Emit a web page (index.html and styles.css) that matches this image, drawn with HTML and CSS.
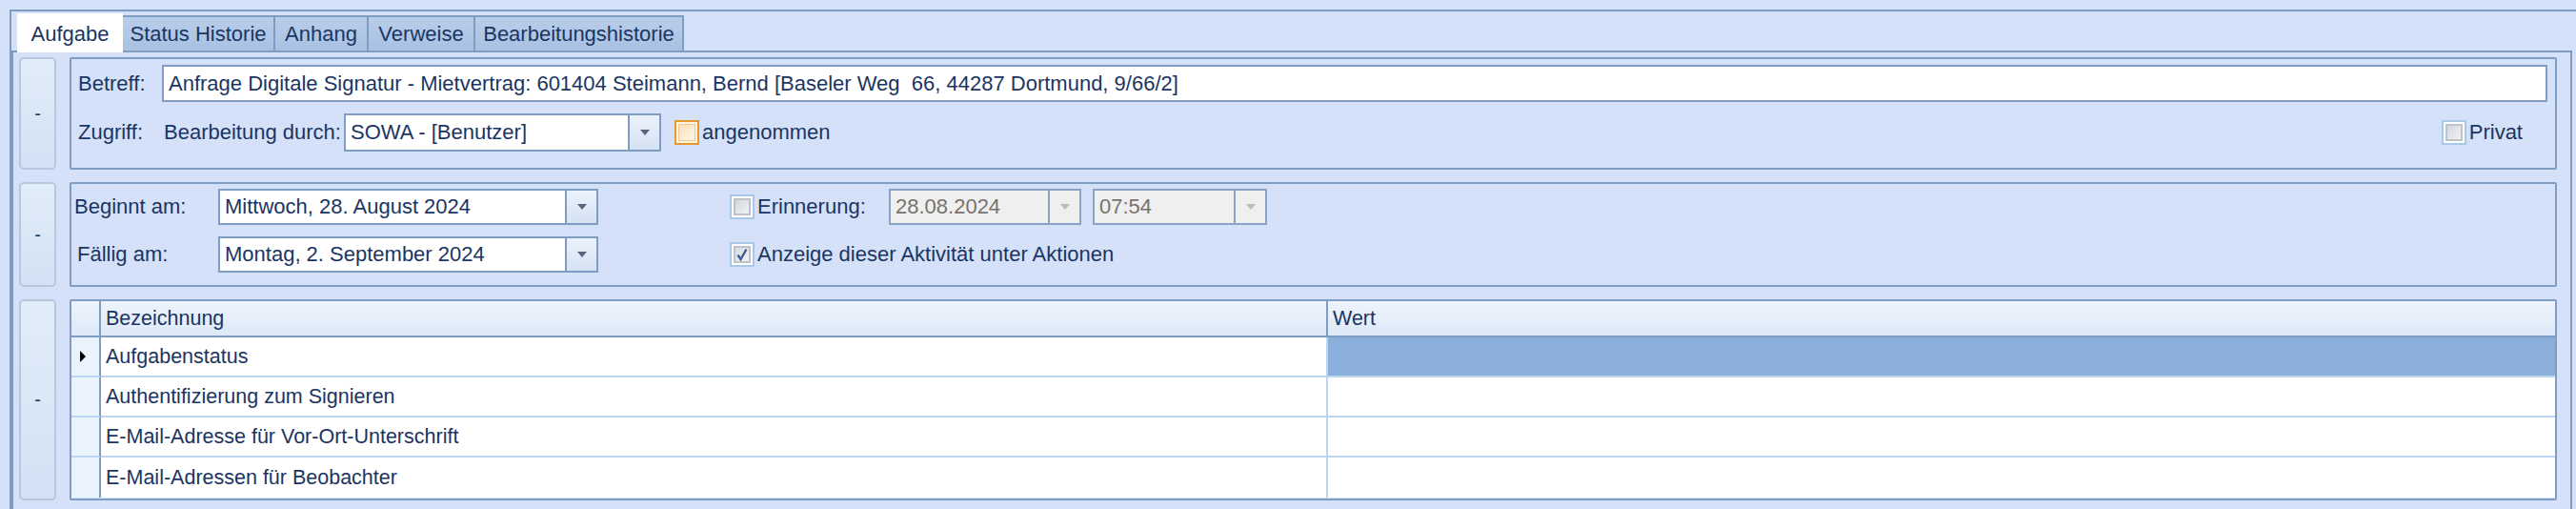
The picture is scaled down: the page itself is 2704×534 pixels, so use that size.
FILE: index.html
```html
<!DOCTYPE html>
<html lang="de">
<head>
<meta charset="utf-8">
<title>Aufgabe</title>
<link rel="stylesheet" href="styles.css">
</head>
<body>
<div class="frame">
  <div class="tabs">
    <div class="tab active t-aufgabe">Aufgabe</div>
    <div class="tab t-status">Status Historie</div>
    <div class="tab t-anhang">Anhang</div>
    <div class="tab t-verweise">Verweise</div>
    <div class="tab t-bearb">Bearbeitungshistorie</div>
  </div>
  <div class="page">
    <section class="row">
      <div class="collapse">-</div>
      <div class="group g1">
        <div class="line">
          <span class="lbl lbl-betreff">Betreff:</span>
          <div class="input grow">Anfrage Digitale Signatur - Mietvertrag: 601404 Steimann, Bernd [Baseler Weg&nbsp; 66, 44287 Dortmund, 9/66/2]</div>
        </div>
        <div class="line line2">
          <span class="lbl lbl-zugriff">Zugriff:</span>
          <span class="lbl lbl-bd">Bearbeitung durch:</span>
          <div class="combo combo-user"><span class="ctext">SOWA - [Benutzer]</span><span class="drop"><i class="arrow"></i></span></div>
          <span class="chk chk-orange"><i></i></span>
          <span class="chk-text">angenommen</span>
          <span class="spacer"></span>
          <span class="chk chk-plain"><i></i></span>
          <span class="chk-text privat">Privat</span>
        </div>
      </div>
    </section>
    <section class="row">
      <div class="collapse">-</div>
      <div class="group g2">
        <div class="line">
          <span class="lbl lbl-date">Beginnt am:</span>
          <div class="combo combo-date"><span class="ctext">Mittwoch, 28. August 2024</span><span class="drop"><i class="arrow"></i></span></div>
          <span class="chk chk-plain chk-right"><i></i></span>
          <span class="chk-text lbl-erin">Erinnerung:</span>
          <div class="combo disabled combo-d"><span class="ctext">28.08.2024</span><span class="drop"><i class="arrow"></i></span></div>
          <div class="combo disabled combo-t"><span class="ctext">07:54</span><span class="drop"><i class="arrow"></i></span></div>
        </div>
        <div class="line line-b">
          <span class="lbl lbl-date lbl-faellig">Fällig am:</span>
          <div class="combo combo-date"><span class="ctext">Montag, 2. September 2024</span><span class="drop"><i class="arrow"></i></span></div>
          <span class="chk chk-plain chk-checked chk-right"><i><svg viewBox="0 0 12 14" width="12" height="14"><path d="M1.5 7.5 L4.5 12 L10.5 1.5" fill="none" stroke="#3d5f93" stroke-width="2.4"/></svg></i></span>
          <span class="chk-text">Anzeige dieser Aktivität unter Aktionen</span>
        </div>
      </div>
    </section>
    <section class="row">
      <div class="collapse collapse-tall">-</div>
      <div class="group g3">
        <div class="grid">
          <div class="ind head"></div>
          <div class="cell head c-name">Bezeichnung</div>
          <div class="cell head c-val">Wert</div>

          <div class="ind"><i class="pointer"></i></div>
          <div class="cell c-name">Aufgabenstatus</div>
          <div class="cell c-val selected"></div>

          <div class="ind"></div>
          <div class="cell c-name">Authentifizierung zum Signieren</div>
          <div class="cell c-val"></div>

          <div class="ind"></div>
          <div class="cell c-name">E-Mail-Adresse für Vor-Ort-Unterschrift</div>
          <div class="cell c-val"></div>

          <div class="ind last"></div>
          <div class="cell c-name last">E-Mail-Adressen für Beobachter</div>
          <div class="cell c-val last"></div>
        </div>
      </div>
    </section>
  </div>
</div>
</body>
</html>
```
FILE: styles.css
```css
* { box-sizing: border-box; }
html, body { margin: 0; padding: 0; }
body {
  width: 2704px;
  height: 534px;
  overflow: hidden;
  background: #d5e1f8;
  font-family: "Liberation Sans", Arial, sans-serif;
  font-size: 22px;
  color: #1b3563;
}
.frame {
  margin: 10px 0 0 10px;
  border-top: 2px solid #7f9cc2;
  border-left: 2px solid #7f9cc2;
  height: 524px;
}
.tabs {
  display: flex;
  align-items: flex-end;
  height: 41px;
  padding-left: 6px;
}
.tab {
  height: 37px;
  padding: 0;
  display: flex;
  align-items: center;
  justify-content: center;
  border: 2px solid #7f9cc2;
  border-bottom: none;
  background: linear-gradient(#b8cde9, #a9c1e2);
  margin-left: -2px;
  white-space: nowrap;
}
.tab.active {
  height: 41px;
  margin-bottom: -2px;
  margin-left: 0;
  background: #ffffff;
  border-color: #ffffff;
  position: relative;
  z-index: 1;
}
.t-aufgabe { width: 111px; }
.t-status { width: 162px; }
.t-anhang { width: 100px; }
.t-verweise { width: 114px; }
.t-bearb { width: 221px; }
.page {
  border: 2px solid #7f9cc2;
  margin-right: 4px;
  height: 485px;
  padding: 5px 14px 0 6px;
}
.row {
  display: flex;
  gap: 14px;
  margin-bottom: 13px;
}
.collapse {
  width: 39px;
  flex: none;
  border: 2px solid #b6c8e0;
  border-radius: 5px;
  background: linear-gradient(#e2edfa, #d2e1f4);
  display: flex;
  align-items: center;
  justify-content: center;
  font-size: 20px;
}
.group {
  flex: 1;
  border: 2px solid #7f9cc2;
  border-radius: 2px;
}
.g1 { height: 118px; padding: 6px 8px 0 7px; }
.g2 { height: 110px; padding: 5px 8px 0 3px; }
.g3 { height: 211px; }
.line {
  display: flex;
  align-items: center;
  white-space: nowrap;
}
.line2 { margin-top: 12px; }
.line-b { margin-top: 12px; }
.lbl { flex: none; }
.lbl-betreff { width: 88px; }
.lbl-zugriff { width: 90px; }
.lbl-bd { width: 189px; }
.lbl-date { width: 151px; }
.lbl-faellig { padding-left: 3px; }
.input {
  height: 39px;
  border: 2px solid #7f9cc2;
  background: #fff;
  padding-left: 5px;
  display: flex;
  align-items: center;
}
.grow { flex: 1; }
.combo {
  flex: none;
  display: flex;
  border: 2px solid #7f9cc2;
  background: #fff;
}
.ctext {
  flex: 1;
  display: flex;
  align-items: center;
  padding-left: 5px;
}
.drop {
  width: 33px;
  flex: none;
  border-left: 2px solid #7f9cc2;
  background: linear-gradient(#ecf2fb, #d5e2f3);
  display: flex;
  align-items: center;
  justify-content: center;
}
.arrow {
  width: 0;
  height: 0;
  border-left: 5px solid transparent;
  border-right: 5px solid transparent;
  border-top: 6px solid #55657d;
}
.combo-user { width: 333px; height: 40px; }
.combo-date { width: 399px; height: 38px; }
.combo.disabled { background: #efefef; color: #77736e; border-color: #8aa2c6; }
.combo.disabled .drop { background: #efefef; border-left-color: #8aa2c6; }
.combo.disabled .arrow { border-top-color: #b6bcc4; }
.combo-d { width: 202px; height: 38px; }
.combo-t { width: 183px; height: 38px; margin-left: 12px; }
.chk {
  flex: none;
  width: 26px;
  height: 26px;
  display: flex;
  align-items: center;
  justify-content: center;
}
.chk i {
  display: flex;
  align-items: center;
  justify-content: center;
  width: 18px;
  height: 18px;
}
.chk-orange { margin-left: 14px; border: 2px solid #e59a2d; background: #fff3e2; }
.chk-orange i { width: 18px; height: 18px; border: 1px solid #f3c98f; background: linear-gradient(135deg, #fbe0b9, #fff6ea); }
.chk-plain { border: 2px solid #a9c7e7; background: #fff; }
.chk-plain i { border: 2px solid #bcc3cb; background: linear-gradient(135deg, #d3d7dc, #f1f2f3); }
.chk-checked i { background: linear-gradient(135deg, #d7dbe0, #f2f3f4); }
.chk-right { margin-left: 138px; }
.chk-text { margin-left: 3px; }
.lbl-erin { width: 138px; }
.spacer { flex: 1; }
.privat { margin-right: 26px; }
.grid {
  display: grid;
  grid-template-columns: 31px 1288px 1fr;
  grid-template-rows: 38px repeat(4, 42px);
  height: 100%;
}
.ind {
  border-right: 2px solid #7f9cc2;
  border-bottom: 2px solid #bcd6f1;
  background: #eaf2fc;
  display: flex;
  align-items: center;
  justify-content: center;
}
.cell {
  border-bottom: 2px solid #bcd6f1;
  background: #fff;
  display: flex;
  align-items: center;
  padding-left: 5px;
  font-size: 21.5px;
}
.c-name { border-right: 2px solid #bcd6f1; }
.head {
  background: linear-gradient(#eef4fd, #dde9f8);
  border-bottom: 2px solid #7f9cc2;
}
.cell.head.c-name { border-right-color: #7f9cc2; }
.selected { background: #8aafdb; }
.last { border-bottom: none; }
.pointer {
  width: 0;
  height: 0;
  border-left: 6px solid #000;
  border-top: 6px solid transparent;
  border-bottom: 6px solid transparent;
  margin-right: 6px;
}
.collapse-tall { height: 211px; }
```
